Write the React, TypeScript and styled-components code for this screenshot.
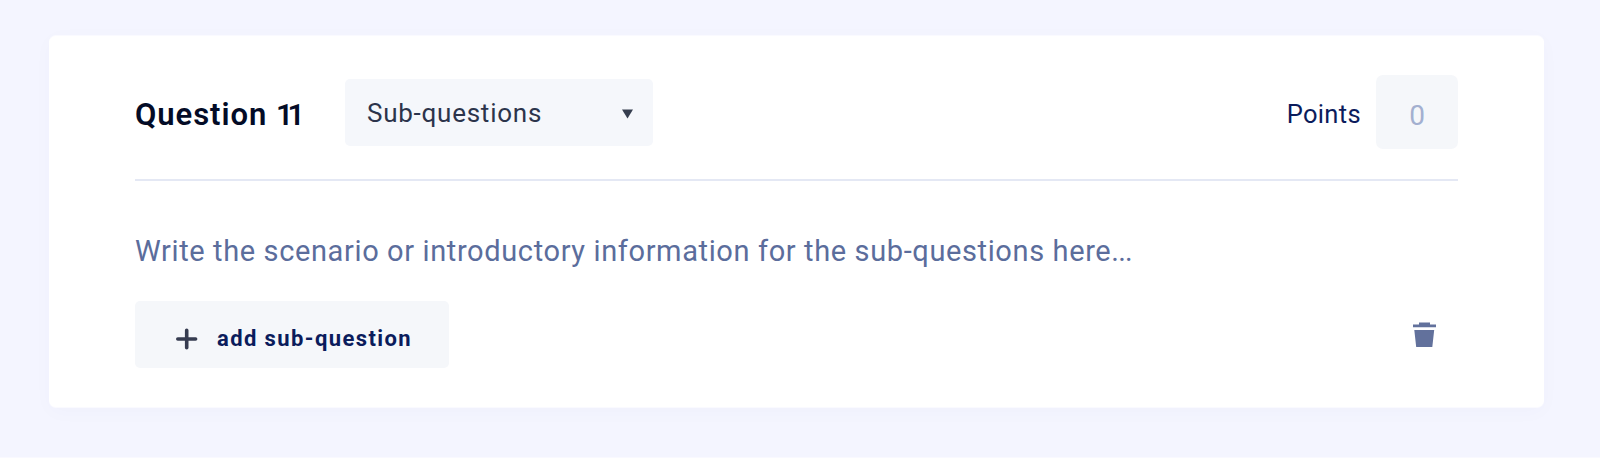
import React from 'react';
import styled, { createGlobalStyle } from 'styled-components';

const GlobalStyle = createGlobalStyle`
  * { box-sizing: border-box; }
  body {
    margin: 0;
    background: #f4f5ff;
    font-family: Roboto, "Liberation Sans", sans-serif;
  }
`;

const Page = styled.main`
  height: 458px;
  padding: 35px 56px 0 49px;
  border-bottom: 1px solid #f9f9ff;
`;

const Card = styled.section`
  height: 373px;
  padding: 39px 86px 0;
  border: solid #fafaff;
  border-width: 1px 0;
  background: #fff;
  border-radius: 7px;
  box-shadow: 0 4px 20px rgba(40, 50, 130, 0.025);
`;

const Header = styled.header`
  display: flex;
  align-items: flex-start;
  height: 106px;
  border-bottom: 2px solid #e4e8f4;
`;

const Title = styled.h2`
  margin: 22px 0 0;
  width: 210px;
  color: #030b26;
  font-size: 31px;
  line-height: 36px;
  font-weight: 600;
  letter-spacing: 0.95px;
  white-space: nowrap;
`;

const TitleNumber = styled.span`
  font-size: 30px;
  letter-spacing: -5.5px;
`;

const TypeSelect = styled.button`
  display: flex;
  align-items: center;
  justify-content: space-between;
  width: 308px;
  height: 67px;
  margin-top: 4px;
  padding: 0 20px 0 22px;
  border: 0;
  border-radius: 5px;
  background: #f5f7fb;
  color: #2c344b;
  font: 400 26px/30px Roboto, sans-serif;
  letter-spacing: 0.75px;
`;

const Caret = styled.svg`
  margin-top: 2px;
`;

const Points = styled.label`
  display: flex;
  align-items: flex-start;
  gap: 15px;
  margin-left: auto;
  color: #0b1c5c;
  font-size: 25.5px;
  line-height: 32px;
  letter-spacing: 0.35px;
`;

const PointsLabel = styled.span`
  margin-top: 23px;
`;

const PointsValue = styled.span`
  width: 82px;
  height: 74px;
  padding-top: 4px;
  border-radius: 7px;
  background: #f5f7fa;
  color: #a3b0d0;
  font-size: 28px;
  line-height: 74px;
  letter-spacing: 0;
  text-align: center;
`;

const Prompt = styled.p`
  margin: 52px 0 0;
  color: #5b6d9c;
  font-size: 29px;
  line-height: 36px;
  letter-spacing: 0.62px;
  white-space: nowrap;
`;

const Ellipsis = styled.span`
  letter-spacing: -0.8px;
`;

const Footer = styled.footer`
  display: flex;
  align-items: flex-start;
  justify-content: space-between;
  margin-top: 32px;
`;

const AddButton = styled.button`
  display: flex;
  align-items: center;
  gap: 18px;
  width: 314px;
  height: 67px;
  padding: 8px 0 0 40px;
  border: 0;
  border-radius: 5px;
  background: #f5f7fa;
  color: #0b1c5c;
  font: 700 22px/30px Roboto, sans-serif;
  letter-spacing: 1.4px;
  white-space: nowrap;
`;

const DeleteButton = styled.button`
  display: flex;
  margin: 21px 22px 0 0;
  padding: 0;
  border: 0;
  background: none;
`;

export default function App() {
  return (
    <>
      <GlobalStyle />
      <Page>
        <Card>
          <Header>
            <Title>Question <TitleNumber>11</TitleNumber></Title>
            <TypeSelect>
              Sub-questions
              <Caret width="11" height="10" viewBox="0 0 11 10">
                <path d="M0 0.5H11L5.5 9.5Z" fill="#363e4f" />
              </Caret>
            </TypeSelect>
            <Points>
              <PointsLabel>Points</PointsLabel>
              <PointsValue>0</PointsValue>
            </Points>
          </Header>
          <Prompt>
            Write the scenario or introductory information for the sub-questions here<Ellipsis>...</Ellipsis>
          </Prompt>
          <Footer>
            <AddButton>
              <svg width="24" height="22" viewBox="0 0 24 22" fill="none" stroke="#363c50" strokeWidth="3.6" strokeLinecap="round">
                <path d="M2.8 11H20.6M11.7 2.3V19.7" />
              </svg>
              add sub-question
            </AddButton>
            <DeleteButton aria-label="Delete question">
              <svg width="23" height="26" viewBox="0 0 23 26" fill="#62719c">
                <path d="M6 0.6H17V2.4H23V5.3H0V2.4H6ZM1.3 8H21.2L19.3 25H3.2Z" />
              </svg>
            </DeleteButton>
          </Footer>
        </Card>
      </Page>
    </>
  );
}
